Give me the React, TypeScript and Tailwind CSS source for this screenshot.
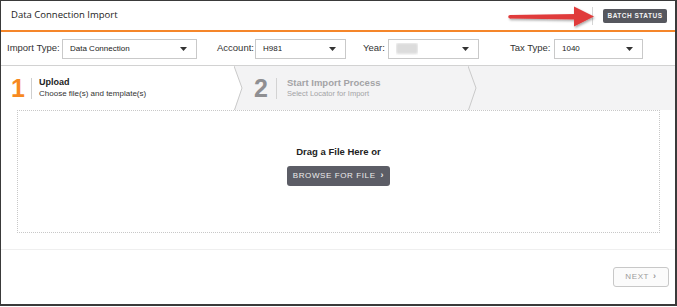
import React from 'react'

const Caret = () => (
  <svg width="7" height="4" viewBox="0 0 7 4" className="shrink-0">
    <path d="M0 0 L7 0 L3.5 4 Z" fill="#333" />
  </svg>
)

function Select({ width, children }: { width: string; children?: React.ReactNode }) {
  return (
    <div
      className={`${width} h-[20px] border border-[#c9c9c9] bg-white flex items-center justify-between pl-[7px] pr-[9px] text-[8px] text-[#222] shrink-0`}
    >
      <span className="truncate">{children}</span>
      <Caret />
    </div>
  )
}

function Chevron({ fill }: { fill: string }) {
  return (
    <svg width="9" height="44" viewBox="0 0 9 44" className="shrink-0">
      <polygon points="0,0 8,22 0,44" fill={fill} />
      <polyline points="0,0 8,22 0.5,44" fill="none" stroke="#c9c9c9" strokeWidth="1" />
    </svg>
  )
}

export default function App() {
  return (
    <div
      className="relative w-[677px] h-[306px] bg-white border-l border-t border-b-2 border-r-2 border-[#3a3a3a] flex flex-col"
      style={{ fontFamily: '"Liberation Sans", Arial, sans-serif' }}
    >
      {/* header */}
      <div className="h-[31px] shrink-0 flex items-center justify-between pl-[10px] pr-[8px] border-b-2 border-[#f5862a]">
        <span className="text-[9.5px] text-[#222]" style={{ fontFamily: '"Open Sans", sans-serif' }}>
          Data Connection Import
        </span>
        <div className="flex items-center h-full">
          <div className="w-px h-[18px] bg-[#d6d6d6] mr-[10px]" />
          <button className="h-[14px] w-[64px] rounded-[2px] bg-[#56575e] text-[#f2f2f2] text-[6.5px] font-bold tracking-[0.5px] flex items-center justify-center">
            BATCH STATUS
          </button>
        </div>
      </div>

      {/* red annotation arrow */}
      <svg className="absolute left-[505px] top-[3px]" width="92" height="26" viewBox="0 0 92 26">
        <defs>
          <filter id="sh" x="-10%" y="-30%" width="120%" height="160%">
            <feDropShadow dx="1" dy="1.5" stdDeviation="1" floodColor="#000" floodOpacity="0.35" />
          </filter>
        </defs>
        <g filter="url(#sh)">
          <path d="M4 11 L71 10 L71 15.5 L4 14.5 Z" fill="#e03a3a" />
          <circle cx="4" cy="12.75" r="1.75" fill="#e03a3a" />
          <path d="M68 2.5 L88 12.5 L68 22.5 Z" fill="#e03a3a" />
        </g>
      </svg>

      {/* filter row */}
      <div className="h-[33px] shrink-0 flex items-center pl-[6px] text-[9.5px] text-[#333] whitespace-nowrap">
        <span className="w-[55px] shrink-0">Import Type:</span>
        <Select width="w-[135px]">Data Connection</Select>
        <span className="w-[38px] ml-[20px] shrink-0">Account:</span>
        <Select width="w-[91px]">H981</Select>
        <span className="w-[25px] ml-[17px] shrink-0">Year:</span>
        <Select width="w-[91px]">
          <span className="inline-block w-[22px] h-[11px] bg-[#dcdcdc] rounded-[2px] blur-[1px] align-middle" />
        </Select>
        <span className="w-[44px] ml-[31px] shrink-0">Tax Type:</span>
        <Select width="w-[89px]">1040</Select>
      </div>

      {/* steps */}
      <div className="h-[45px] shrink-0 border-t border-[#d2d2d2] bg-[#f3f3f4] flex">
        <div className="w-[233px] bg-white flex items-center pl-[10px]">
          <span className="text-[25px] font-bold text-[#f7891f] leading-none w-[20px]">1</span>
          <div className="w-px h-[21px] bg-[#cfcfcf]" />
          <div className="ml-[7px] flex flex-col leading-[11px]">
            <span className="text-[9px] font-bold text-[#222]">Upload</span>
            <span className="text-[8px] text-[#333]">Choose file(s) and template(s)</span>
          </div>
        </div>
        <Chevron fill="#ffffff" />
        <div className="w-[225px] flex items-center pl-[11px]">
          <span className="text-[25px] font-bold text-[#8f8f92] leading-none w-[22px]">2</span>
          <div className="w-px h-[21px] bg-[#d3d3d3]" />
          <div className="ml-[10px] flex flex-col leading-[11px]">
            <span className="text-[9.5px] font-bold text-[#a3a3a6]">Start Import Process</span>
            <span className="text-[7.5px] text-[#a3a3a6]">Select Locator for Import</span>
          </div>
        </div>
        <Chevron fill="#f3f3f4" />
      </div>

      {/* drop zone */}
      <div className="ml-[16px] mr-[15px] h-[123px] shrink-0 border border-dotted border-[#c8c8c8] flex flex-col items-center pt-[35px]">
        <span className="text-[9.5px] font-bold text-[#222] leading-[12px]">Drag a File Here or</span>
        <button className="mt-[8px] w-[103px] h-[20px] rounded-[3px] bg-[#5c5d66] text-[#ececec] text-[8px] tracking-[0.6px] flex items-center justify-center gap-[5px]">
          BROWSE FOR FILE <span className="font-bold text-[9px]">›</span>
        </button>
      </div>

      {/* footer */}
      <div className="mt-[16px] border-t border-[#efefef] flex justify-end pr-[6px] pt-[17px]">
        <button className="w-[56px] h-[20px] rounded-[3px] border border-[#c8c8c8] bg-[#fbfbfb] text-[#9b9b9b] text-[8px] tracking-[0.6px] flex items-center justify-center gap-[4px]">
          NEXT <span className="font-bold text-[9px]">›</span>
        </button>
      </div>
    </div>
  )
}
